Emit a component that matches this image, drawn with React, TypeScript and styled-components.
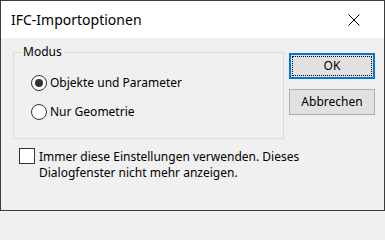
import styled, { createGlobalStyle } from "styled-components";

const GlobalStyle = createGlobalStyle`
  html, body {
    margin: 0;
    padding: 0;
    background: #f0f0f0;
  }
  * {
    box-sizing: border-box;
  }
`;

const Window = styled.div`
  width: 385px;
  height: 211px;
  border: 1px solid #3a3d3a;
  background: #f0f0f0;
  display: flex;
  flex-direction: column;
  font-family: "Noto Sans", "Open Sans", sans-serif;
  font-size: 12px;
  color: #000;
  overflow: hidden;
`;

const TitleBar = styled.div`
  height: 37px;
  flex-shrink: 0;
  background: #fff;
  display: flex;
  align-items: center;
  justify-content: space-between;
  padding-left: 10px;
`;

const Title = styled.span`
  font-size: 14px;
  line-height: 20px;
  margin-top: 1px;
`;

const CloseButton = styled.div`
  width: 45px;
  height: 37px;
  display: flex;
  align-items: center;
  justify-content: center;
  padding-right: 16px;
`;

const Body = styled.div`
  flex: 1;
  display: flex;
  flex-direction: column;
  padding: 7px 9px 0 12px;
`;

const TopRow = styled.div`
  display: flex;
  align-items: flex-start;
  gap: 5px;
`;

const GroupBox = styled.fieldset`
  width: 271px;
  height: 94px;
  margin: 0;
  padding: 0 0 0 17px;
  border: 1px solid #dcdcdc;
  display: flex;
  flex-direction: column;
  gap: 13px;
`;

const Legend = styled.legend`
  margin-left: -10px;
  padding: 0 2px;
  line-height: 14px;
  height: 14px;
`;

const OptionRow = styled.label<{ $first?: boolean }>`
  display: flex;
  align-items: center;
  gap: 3px;
  height: 16px;
  margin-top: ${({ $first }) => ($first ? "16px" : "0")};
  line-height: 16px;
`;

const RadioCircle = styled.span<{ $checked?: boolean }>`
  width: 16px;
  height: 16px;
  border-radius: 50%;
  border: 1px solid #333;
  background: #fff;
  display: flex;
  align-items: center;
  justify-content: center;
  flex-shrink: 0;

  &::after {
    content: "";
    width: 8px;
    height: 8px;
    border-radius: 50%;
    background: #333;
    display: ${({ $checked }) => ($checked ? "block" : "none")};
  }
`;

const ButtonColumn = styled.div`
  margin-top: 8px;
  display: flex;
  flex-direction: column;
  gap: 10px;
`;

const Button = styled.div<{ $default?: boolean }>`
  width: 86px;
  height: 26px;
  background: #e1e1e1;
  border: ${({ $default }) =>
    $default ? "2px solid #0078d7" : "1px solid #adadad"};
  display: flex;
  align-items: center;
  justify-content: center;
  position: relative;
  line-height: 16px;

  ${({ $default }) =>
    $default &&
    `
    &::after {
      content: "";
      position: absolute;
      inset: 1px;
      border: 1px dotted #000;
    }
  `}
`;

const CheckRow = styled.label`
  margin-top: 9px;
  margin-left: 6px;
  display: flex;
  align-items: flex-start;
  gap: 4px;
  line-height: 16px;
`;

const CheckBox = styled.span`
  width: 16px;
  height: 16px;
  border: 1px solid #333;
  background: #fff;
  flex-shrink: 0;
`;

const CheckText = styled.span`
  margin-top: 1px;
`;

const CloseIcon = () => (
  <svg width="12" height="12" viewBox="0 0 12 12">
    <path d="M0.5 0.5 L11.5 11.5 M11.5 0.5 L0.5 11.5" stroke="#000" strokeWidth="1" />
  </svg>
);

export default function App() {
  return (
    <>
      <GlobalStyle />
      <Window>
        <TitleBar>
          <Title>IFC-Importoptionen</Title>
          <CloseButton>
            <CloseIcon />
          </CloseButton>
        </TitleBar>
        <Body>
          <TopRow>
            <GroupBox>
              <Legend>Modus</Legend>
              <OptionRow $first>
                <RadioCircle $checked />
                Objekte und Parameter
              </OptionRow>
              <OptionRow>
                <RadioCircle />
                Nur Geometrie
              </OptionRow>
            </GroupBox>
            <ButtonColumn>
              <Button $default>OK</Button>
              <Button>Abbrechen</Button>
            </ButtonColumn>
          </TopRow>
          <CheckRow>
            <CheckBox />
            <CheckText>
              Immer diese Einstellungen verwenden. Dieses
              <br />
              Dialogfenster nicht mehr anzeigen.
            </CheckText>
          </CheckRow>
        </Body>
      </Window>
    </>
  );
}
